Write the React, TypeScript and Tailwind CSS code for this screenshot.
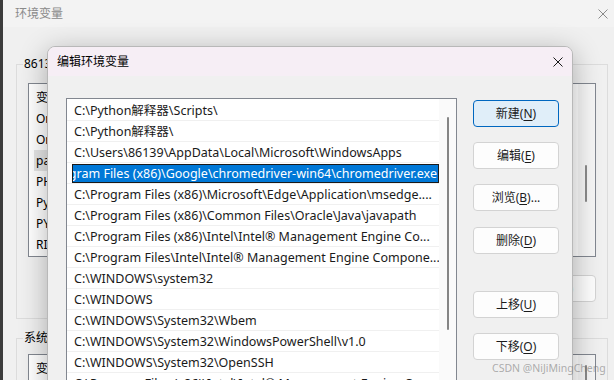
import React from "react";

const PATHS = [
  "C:\\Python解释器\\Scripts\\",
  "C:\\Python解释器\\",
  "C:\\Users\\86139\\AppData\\Local\\Microsoft\\WindowsApps",
  "C:\\Program Files (x86)\\Google\\chromedriver-win64\\chromedriver.exe",
  "C:\\Program Files (x86)\\Microsoft\\Edge\\Application\\msedge....",
  "C:\\Program Files (x86)\\Common Files\\Oracle\\Java\\javapath",
  "C:\\Program Files (x86)\\Intel\\Intel® Management Engine Co...",
  "C:\\Program Files\\Intel\\Intel® Management Engine Compone...",
  "C:\\WINDOWS\\system32",
  "C:\\WINDOWS",
  "C:\\WINDOWS\\System32\\Wbem",
  "C:\\WINDOWS\\System32\\WindowsPowerShell\\v1.0",
  "C:\\WINDOWS\\System32\\OpenSSH",
  "C:\\Program Files (x86)\\Intel\\Intel® Management Engine Co...",
];

const SELECTED = 3;

const USER_VARS = ["变量", "OneDrive", "OneDriveConsumer", "path", "PHPSTORM", "PyCharm", "PYTHONPATH", "RIDER"];

function CloseIcon({ className }: { className?: string }) {
  return (
    <svg viewBox="0 0 10 10" className={className} fill="none" stroke="currentColor" strokeWidth="1">
      <path d="M0.5 0.5 L9.5 9.5 M9.5 0.5 L0.5 9.5" />
    </svg>
  );
}

function Mnemonic({ label, letter, suffix = "" }: { label: string; letter: string; suffix?: string }) {
  return (
    <>
      {label}(<span className="underline underline-offset-2">{letter}</span>){suffix}
    </>
  );
}

function DialogButton({ primary, className, children }: { primary?: boolean; className?: string; children: React.ReactNode }) {
  return (
    <button
      className={
        "flex h-[27px] w-[86px] shrink-0 items-center justify-center rounded-[4px] border text-[12px] text-[#1b1b1b] " +
        (primary ? "border-[#0067c0] bg-[#e0eef9] " : "border-[#d3d3d3] bg-[#fdfdfd] ") +
        (className ?? "")
      }
    >
      {children}
    </button>
  );
}

function BackgroundWindow() {
  return (
    <div className="ml-[3px] flex h-full flex-col bg-[#f0f0f0]">
      <div className="flex h-[27px] shrink-0 items-center justify-between bg-[#f3f3f3] pl-[12px] pr-[6px] text-[12px] text-[#8a8a8a]">
        <span>环境变量</span>
        <CloseIcon className="size-[10px] text-[#8a8a8a]" />
      </div>

      <fieldset className="ml-[13px] mr-[6px] mt-[29px] shrink-0 border border-[#dcdcdc] px-[11px] pb-[16px]">
        <legend className="ml-[-5px] px-[1px] leading-[16px]">86139 的用户变量(U)</legend>
        <div className="mt-[11px] flex h-[174px] border border-[#828790] bg-white">
          <div className="flex-1 pt-[3px]">
            {USER_VARS.map((name) => (
              <div key={name} className="flex h-[21px] items-center pl-[5px]">
                <span className={"px-[2px] leading-[21px] " + (name === "path" ? "w-[220px] bg-[#e5e5e5]" : "")}>{name}</span>
              </div>
            ))}
          </div>
          <div className="w-[17px] bg-[#f6f6f6]">
            <div className="ml-[7px] mt-[81px] h-[37px] w-[2px] rounded-full bg-[#8a8a8a]" />
          </div>
        </div>
        <div className="mt-[18px] flex justify-end gap-[8px]">
          <DialogButton>新建(N)...</DialogButton>
          <DialogButton>编辑(E)...</DialogButton>
          <DialogButton>删除(D)</DialogButton>
        </div>
      </fieldset>

      <fieldset className="ml-[13px] mr-[6px] mt-[11px] shrink-0 border border-[#dcdcdc] px-[11px] pb-[16px]">
        <legend className="ml-[-5px] px-[1px] leading-[16px]">系统变量(S)</legend>
        <div className="mt-[8px] flex h-[120px] border border-[#828790] bg-white">
          <div className="flex-1 pt-[3px]">
            <div className="flex h-[21px] items-center pl-[7px]">变量</div>
          </div>
          <div className="w-[17px] bg-[#f6f6f6]">
            <div className="ml-[7px] mt-[10px] h-[40px] w-[2px] rounded-full bg-[#8a8a8a]" />
          </div>
        </div>
      </fieldset>
    </div>
  );
}

function EditDialog() {
  return (
    <div className="absolute left-[47px] top-[46px] flex h-[360px] w-[526px] flex-col overflow-hidden rounded-t-[8px] border border-[#b8b8b8] bg-[#f0f0f0] shadow-[0_6px_28px_rgba(0,0,0,0.3)]">
      <div className="flex h-[29px] shrink-0 items-center justify-between bg-[#f6eef5] pl-[9px] pr-[9px]">
        <span className="text-[12px] text-black">编辑环境变量</span>
        <CloseIcon className="size-[10px] text-[#1a1a1a]" />
      </div>

      <div className="flex shrink-0 gap-[16px] pl-[18px] pt-[22px]">
        <div className="flex h-[300px] w-[391px] shrink-0 border border-[#828790] bg-white">
          <div className="min-w-0 flex-1 pt-[1px] text-[12.5px]">
            {PATHS.map((p, i) =>
              i === SELECTED ? (
                <div key={i} className="h-[21px] border-b border-[#f0f0f0] py-[1px] pl-[5px]">
                  <div className="flex h-[19px] items-center justify-end overflow-hidden border border-[#1a1a1a] bg-[#0078d7] pr-[1px] pt-[1px]">
                    <span className="shrink-0 whitespace-nowrap text-white">{p}</span>
                  </div>
                </div>
              ) : (
                <div
                  key={i}
                  className="flex h-[21px] items-center overflow-hidden whitespace-nowrap border-b border-[#f0f0f0] pl-[7px] pt-[2px] text-[#1a1a1a]"
                >
                  {p}
                </div>
              )
            )}
          </div>
          <div className="w-[17px] shrink-0 bg-[#fafafa]">
            <div className="ml-[8px] mt-[18px] h-[213px] w-[2px] rounded-full bg-[#858585]" />
          </div>
        </div>

        <div className="mt-[2px] flex flex-col">
          <DialogButton primary>
            <Mnemonic label="新建" letter="N" />
          </DialogButton>
          <DialogButton className="mt-[15px]">
            <Mnemonic label="编辑" letter="E" />
          </DialogButton>
          <DialogButton className="mt-[15px]">
            <Mnemonic label="浏览" letter="B" suffix="..." />
          </DialogButton>
          <DialogButton className="mt-[16px]">
            <Mnemonic label="删除" letter="D" />
          </DialogButton>
          <DialogButton className="mt-[37px]">
            <Mnemonic label="上移" letter="U" />
          </DialogButton>
          <DialogButton className="mt-[15px]">
            <Mnemonic label="下移" letter="O" />
          </DialogButton>
        </div>
      </div>
    </div>
  );
}

export default function App() {
  return (
    <div className="relative h-[380px] w-[614px] overflow-hidden bg-[#3c3c3c] font-['Noto_Sans','Noto_Sans_CJK_SC',sans-serif] text-[12px] text-black">
      <BackgroundWindow />
      <EditDialog />
      <div className="absolute left-[492px] top-[361px] whitespace-nowrap text-[10.5px] leading-[14px] text-[rgba(110,110,110,0.55)]">
        CSDN @NiJiMingCheng
      </div>
    </div>
  );
}
